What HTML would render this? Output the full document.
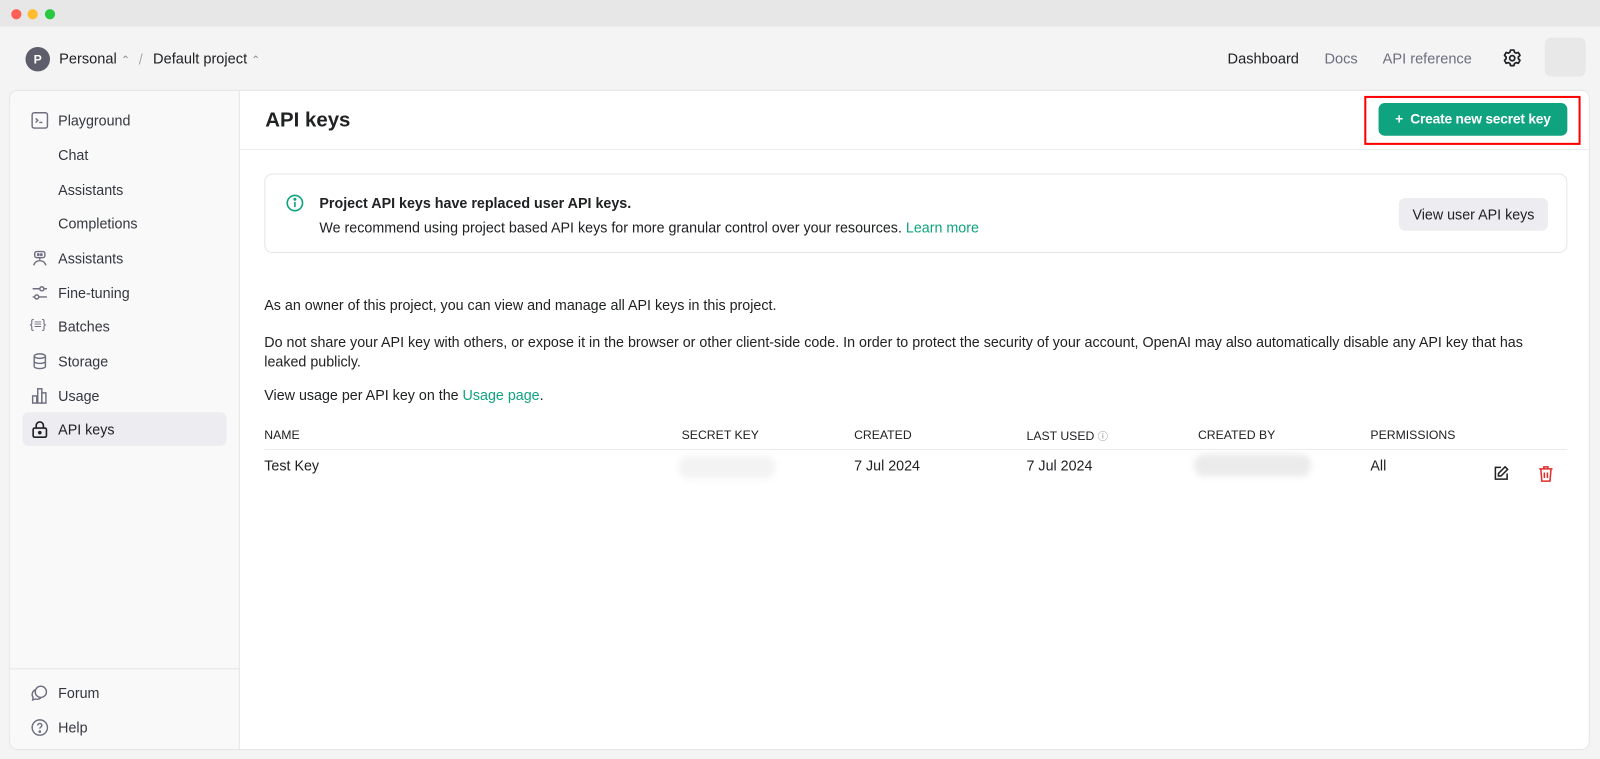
<!DOCTYPE html>
<html><head><style>
*{box-sizing:border-box;margin:0;padding:0}
body{width:1600px;height:759px;background:#f4f4f5;font-family:"Liberation Sans",sans-serif;color:#202123;overflow:hidden;font-size:14px}
#w{position:absolute;left:0;top:0;width:1568px;height:744px;transform:scale(1.0204);transform-origin:0 0}
.tb{position:absolute;left:0;top:0;width:1568px;height:26px;background:#e7e7e7}
.dot{position:absolute;top:9px;width:10px;height:10px;border-radius:50%}
.a{position:absolute;white-space:nowrap}
.panel{position:absolute;left:9px;top:88px;width:1549px;height:647px;background:#fff;border:1px solid #e5e5e5;border-radius:8px;overflow:hidden}
.side{position:absolute;left:0;top:0;width:225px;height:100%;background:#f9f9f9;border-right:1px solid #e5e5e5}
.ni{position:absolute;left:47px;font-size:14px;color:#353740}
.ic{position:absolute;left:20px;width:18px;height:18px}
.g{color:#10a37f}
.h{position:absolute;font-size:12px;top:330px;color:#202123}
.c{position:absolute;top:359px;font-size:14px}
</style></head><body><div id="w">
<div class="tb">
<div class="dot" style="left:11px;background:#fe5f57"></div>
<div class="dot" style="left:27px;background:#febc2e"></div>
<div class="dot" style="left:44px;background:#28c840"></div>
</div>
<div class="a" style="left:25px;top:46px;width:24px;height:24px;border-radius:50%;background:#5d5d6b;color:#fff;font-size:12px;font-weight:bold;text-align:center;line-height:24px">P</div>
<div class="a" style="left:58px;top:50px;font-size:14.3px">Personal <span style="color:#888;font-size:11px">⌃</span></div>
<div class="a" style="left:136px;top:50px;color:#aaa;font-size:14px">/</div>
<div class="a" style="left:150px;top:50px;font-size:14.3px">Default project <span style="color:#888;font-size:11px">⌃</span></div>
<div class="a" style="left:1203px;top:50px;font-size:14.3px">Dashboard</div>
<div class="a" style="left:1298px;top:50px;font-size:14.3px;color:#6e6e80">Docs</div>
<div class="a" style="left:1355px;top:50px;font-size:14.3px;color:#6e6e80">API reference</div>
<svg class="a" style="left:1472px;top:47px" width="20" height="20" viewBox="0 0 24 24" fill="none" stroke="#202123" stroke-width="2" stroke-linejoin="round"><path d="M10 2.5h4l.7 2.6 1.8 1 2.6-.8 2 3.4-1.9 1.9v2.1l1.9 1.9-2 3.4-2.6-.8-1.8 1-.7 2.6h-4l-.7-2.6-1.8-1-2.6.8-2-3.4 1.9-1.9v-2.1L2.9 8.7l2-3.4 2.6.8 1.8-1z"/><circle cx="12" cy="12" r="3"/></svg>
<div class="a" style="left:1514px;top:37px;width:40px;height:38px;background:#e8e8e8;border-radius:6px"></div>

<div class="panel">
<div class="side">
<svg class="ic" style="top:20px" viewBox="0 0 18 18" fill="none" stroke="#6e6e80" stroke-width="1.4"><rect x="1.5" y="1.5" width="15" height="15" rx="2"/><path d="M5 7l2 2-2 2M8.5 11h3"/></svg>
<div class="ni" style="top:21px">Playground</div>
<div class="ni" style="top:55px">Chat</div>
<div class="ni" style="top:89px">Assistants</div>
<div class="ni" style="top:122px">Completions</div>
<svg class="ic" style="top:155px" viewBox="0 0 18 18" fill="none" stroke="#6e6e80" stroke-width="1.4"><rect x="4" y="2.5" width="10" height="6" rx="2"/><circle cx="7.5" cy="5.5" r=".7"/><circle cx="10.5" cy="5.5" r=".7"/><path d="M9 8.5v2M3 16c1-3 3-4.5 6-4.5s5 1.5 6 4.5"/></svg>
<div class="ni" style="top:156px">Assistants</div>
<svg class="ic" style="top:189px" viewBox="0 0 18 18" fill="none" stroke="#6e6e80" stroke-width="1.4"><path d="M2 5h14M2 13h14"/><circle cx="11" cy="5" r="2" fill="#f9f9f9"/><circle cx="6" cy="13" r="2" fill="#f9f9f9"/></svg>
<div class="ni" style="top:190px">Fine-tuning</div>
<div class="a" style="left:19px;top:221px;color:#6e6e80;font-size:13px">{≡}</div>
<div class="ni" style="top:223px">Batches</div>
<svg class="ic" style="top:256px" viewBox="0 0 18 18" fill="none" stroke="#6e6e80" stroke-width="1.4"><ellipse cx="9" cy="4" rx="5.5" ry="2.2"/><path d="M3.5 4v10c0 1.2 2.5 2.2 5.5 2.2s5.5-1 5.5-2.2V4M3.5 9c0 1.2 2.5 2.2 5.5 2.2s5.5-1 5.5-2.2"/></svg>
<div class="ni" style="top:257px">Storage</div>
<svg class="ic" style="top:290px" viewBox="0 0 18 18" fill="none" stroke="#6e6e80" stroke-width="1.4"><rect x="2" y="9" width="4" height="7"/><rect x="7" y="2" width="4" height="14"/><rect x="11" y="6" width="4" height="10"/></svg>
<div class="ni" style="top:291px">Usage</div>
<div class="a" style="left:12px;top:315px;width:200px;height:33px;background:#ececf1;border-radius:6px"></div>
<svg class="ic" style="top:323px" viewBox="0 0 18 18" fill="none" stroke="#202123" stroke-width="1.6"><rect x="2.5" y="7.5" width="13" height="9" rx="1.5"/><path d="M5.5 7.5V5a3.5 3.5 0 017 0v2.5"/><circle cx="9" cy="12" r="1" fill="#202123"/></svg>
<div class="ni" style="top:324px;color:#202123">API keys</div>
<div class="a" style="left:0;top:566px;width:225px;border-top:1px solid #e5e5e5"></div>
<svg class="ic" style="top:581px" viewBox="0 0 18 18" fill="none" stroke="#6e6e80" stroke-width="1.4"><circle cx="10" cy="8" r="5.5"/><path d="M4.5 6a5 5 0 00-2 7.5L2 16l3-1a5 5 0 005-1"/></svg>
<div class="ni" style="top:582px">Forum</div>
<svg class="ic" style="top:615px" viewBox="0 0 18 18" fill="none" stroke="#6e6e80" stroke-width="1.4"><circle cx="9" cy="9" r="7.5"/><path d="M7 7a2 2 0 114 0c0 1.5-2 1.5-2 3"/><circle cx="9" cy="13" r=".6" fill="#6e6e80"/></svg>
<div class="ni" style="top:616px">Help</div>
</div>

<div class="a" style="left:250px;top:18px;font-size:20px;font-weight:bold">API keys</div>
<div class="a" style="left:225px;top:57px;width:1325px;border-top:1px solid #ececec"></div>
<div class="a" style="left:1327px;top:5px;width:212px;height:48px;border:2.5px solid #f00"></div>
<div class="a" style="left:1341px;top:12px;width:185px;height:32px;background:#10a37f;border-radius:6px;color:#fff;font-weight:bold;font-size:13.5px;line-height:32px;text-align:center;letter-spacing:-0.2px">+&nbsp; Create new secret key</div>

<div class="a" style="left:249px;top:81px;width:1277px;height:78px;border:1px solid #e5e5e5;border-radius:8px"></div>
<svg class="a" style="left:270px;top:101px" width="18" height="18" viewBox="0 0 18 18" fill="none" stroke="#10a37f" stroke-width="1.6"><circle cx="9" cy="9" r="7.5"/><path d="M9 8v5"/><circle cx="9" cy="5.3" r=".7" fill="#10a37f"/></svg>
<div class="a" style="left:303px;top:102px;font-weight:bold;font-size:14px">Project API keys have replaced user API keys.</div>
<div class="a" style="left:303px;top:126px;font-size:14px">We recommend using project based API keys for more granular control over your resources. <span class="g">Learn more</span></div>
<div class="a" style="left:1361px;top:105px;width:146px;height:32px;background:#ececf1;border-radius:6px;font-size:14px;line-height:32px;text-align:center">View user API keys</div>

<div class="a" style="left:249px;top:202px">As an owner of this project, you can view and manage all API keys in this project.</div>
<div class="a" style="left:249px;top:237px;line-height:19px">Do not share your API key with others, or expose it in the browser or other client-side code. In order to protect the security of your account, OpenAI may also automatically disable any API key that has<br>leaked publicly.</div>
<div class="a" style="left:249px;top:290px">View usage per API key on the <span class="g">Usage page</span>.</div>

<div class="h" style="left:249px">NAME</div>
<div class="h" style="left:658px">SECRET KEY</div>
<div class="h" style="left:827px">CREATED</div>
<div class="h" style="left:996px">LAST USED <span style="color:#888;font-size:10px">ⓘ</span></div>
<div class="h" style="left:1164px">CREATED BY</div>
<div class="h" style="left:1333px">PERMISSIONS</div>
<div class="a" style="left:249px;top:351px;width:1277px;border-top:1px solid #ececec"></div>
<div class="c" style="left:249px">Test Key</div>
<div class="a" style="left:655px;top:358px;width:95px;height:22px;background:#f3f3f3;border-radius:10px;filter:blur(3px)"></div>
<div class="c" style="left:827px">7 Jul 2024</div>
<div class="c" style="left:996px">7 Jul 2024</div>
<div class="a" style="left:1160px;top:356px;width:115px;height:22px;background:#ebebeb;border-radius:10px;filter:blur(3px)"></div>
<div class="c" style="left:1333px">All</div>
<svg class="a" style="left:1453px;top:367px" width="16" height="16" viewBox="0 0 16 16" fill="none" stroke="#202123" stroke-width="1.5"><path d="M8 2H2.5v11.5H14V8"/><path d="M12 1.5l2.5 2.5-6.5 6.5H5.5V8z"/></svg>
<svg class="a" style="left:1497px;top:367px" width="16" height="17" viewBox="0 0 16 17" fill="none" stroke="#e02e2a" stroke-width="1.5"><path d="M1.5 3.5h13M6 3.5V1.5h4v2M3 3.5l1 12h8l1-12M6.5 7v5.5M9.5 7v5.5"/></svg>
</div>
</div></body></html>
